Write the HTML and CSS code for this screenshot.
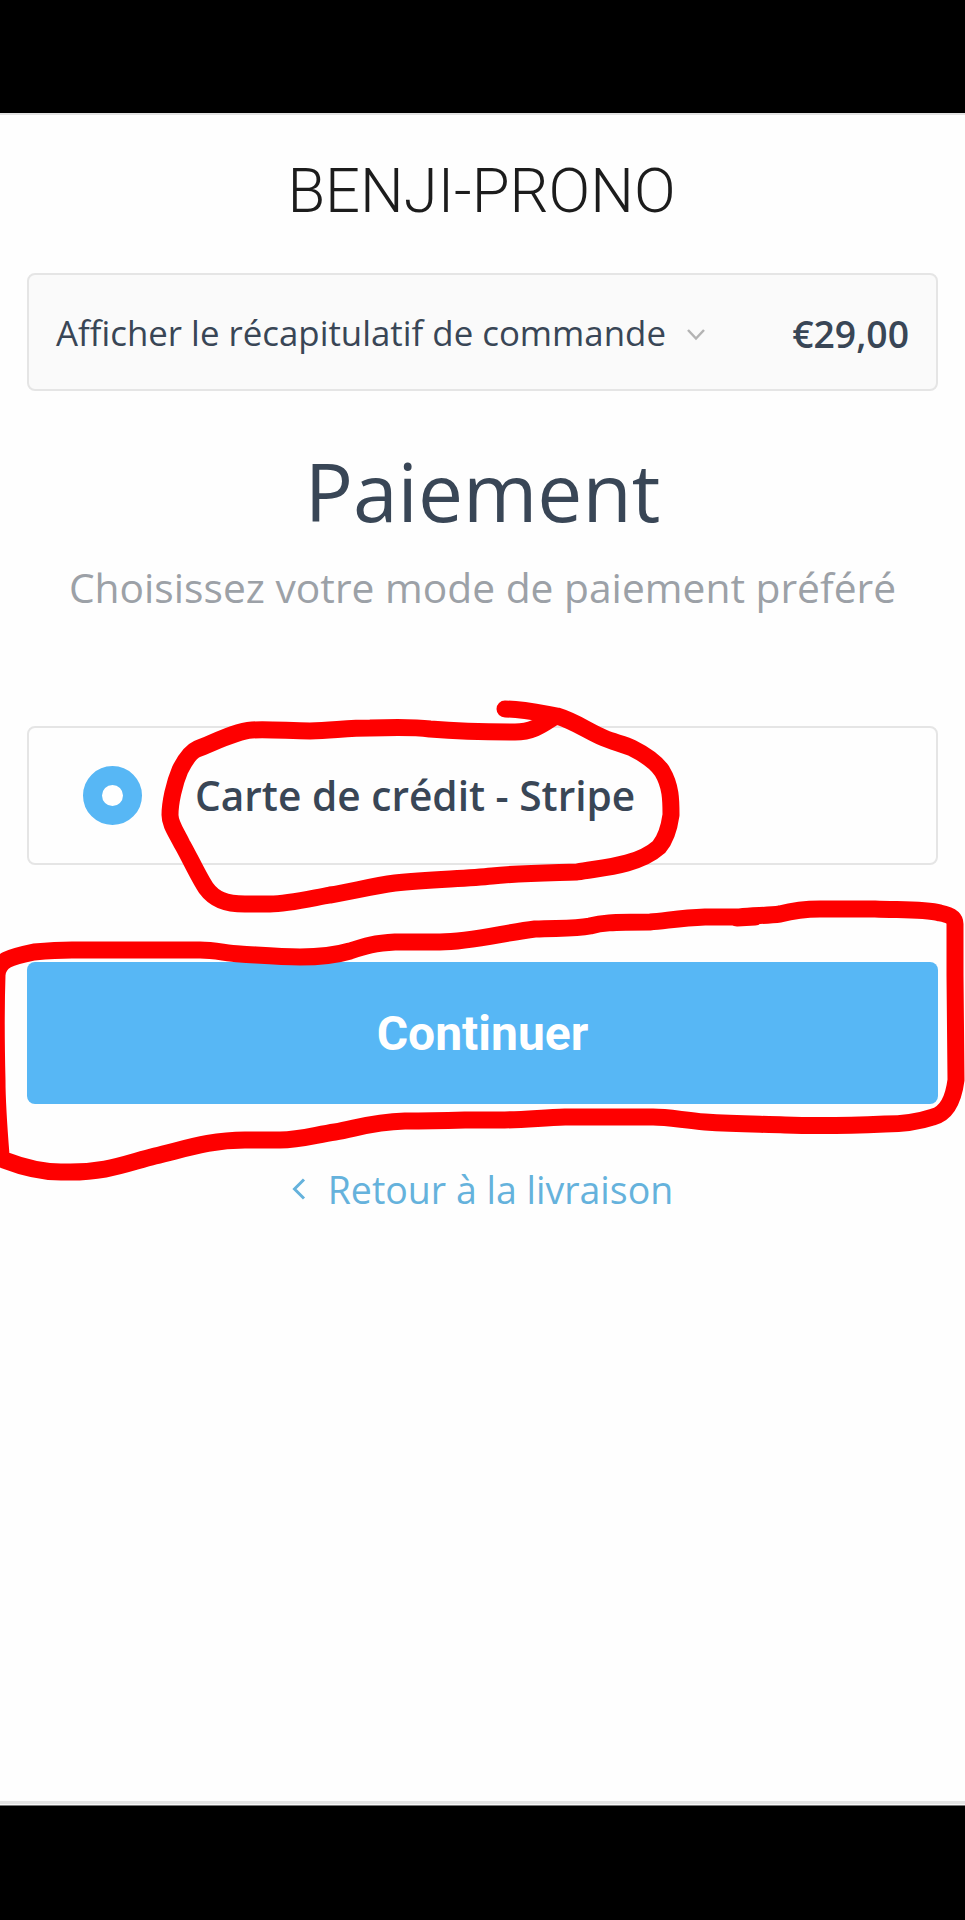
FILE: index.html
```html
<!DOCTYPE html>
<html lang="fr">
<head>
<meta charset="utf-8">
<title>Paiement - BENJI-PRONO</title>
<link rel="stylesheet" href="styles.css">
</head>
<body>
<div class="screen">
  <main class="page">
    <h1 class="brand"><span>BENJI-PRONO</span></h1>
    <section class="summary">
      <span class="summary-label">Afficher le récapitulatif de commande</span>
      <svg class="chevron-down" width="20" height="14" viewBox="0 0 20 14"><path d="M2 2l8 8.500 8-8.500"/></svg>
      <strong class="price">€29,00</strong>
    </section>
    <h2 class="heading"><span>Paiement</span></h2>
    <p class="hint"><span>Choisissez votre mode de paiement préféré</span></p>
    <label class="option">
      <span class="radio"></span>
      <span class="option-label">Carte de crédit - Stripe</span>
    </label>
    <button class="submit"><span>Continuer</span></button>
    <a class="back">
      <svg class="chevron-left" width="14" height="22" viewBox="0 0 14 22"><path d="M12 1.500L2.500 11l9.500 9.500"/></svg>
      <span class="back-label">Retour à la livraison</span>
    </a>
  </main>
  <svg class="marks" width="965" height="1920" viewBox="0 0 965 1920">
    <path d="M505 709C522 709 540 713 557 716C574 721 588 731 604 738C613 742 624 744 632 748C644 754 656 762 662 771C671 786 671 800 671 815C669 829 665 840 659 847C650 855 638 860 627 863C609 868 594 869 577 872C540 873 520 873 492 876C465 879 430 879 395 883C372 886 350 892 330 895C308 899 287 904 270 904H245C225 904 214 899 206 888C199 878 188 854 182 844C176 832 170 824 170 815C170 803 174 784 180 770C185 760 190 752 197 749C213 743 236 731 252 730C270 729 290 731 310 731C335 730 350 728 370 728C400 727 415 727 430 729C455 731 480 732 515 732C533 732 543 724 554 717"/>
    <path d="M1 1155C-1 1130 -3 1105 -3 1080C-4 1040 -4 1005 -3 975C-2 960 10 957 34 952C45 951 58 950 72 950H200C215 950 225 953 240 954C258 955 279 957 300 957C318 957 333 956 350 951C365 946 375 943 395 942H440C470 942 503 933 535 929C560 928 575 929 590 926C601 923 610 922 650 922C665 921 680 918 705 917H740C752 915 766 916 780 914C795 910 804 909 820 909H875C905 910 925 909 940 913C951 915 955 918 955 924V975L956 1080C953 1103 945 1114 933 1117C915 1123 900 1124 885 1124C840 1126 815 1126 785 1125C755 1124 735 1124 705 1122C682 1120 668 1117 653 1117H565C540 1118 520 1120 500 1120H465C430 1121 422 1121 405 1121C370 1122 355 1129 335 1132C315 1135 300 1140 280 1140H245C210 1140 185 1149 155 1156C127 1163 106 1173 65 1172C39 1173 17 1165 4 1160Q1 1157 -3 1156"/>
    <path d="M737 918L755 917"/>
  </svg>
</div>
</body>
</html>
```
FILE: styles.css
```css
* { box-sizing: border-box; }
body { margin: 0; background: #000; }
.screen {
  position: relative;
  width: 965px;
  height: 1920px;
  padding: 113px 0 114px;
  overflow: hidden;
  background: #000;
}
.page {
  display: flex;
  flex-direction: column;
  height: 1693px;
  padding: 0 27px;
  background: linear-gradient(#e2e2e2 0 2px, #fefefe 2px 1688px, #e4e4e4 1688px 1691px, #f8f8f8 1691px 1692px, #777 1692px);
  color: #394656;
  font-family: "Open Sans", "Noto Sans", sans-serif;
}
.brand {
  margin: 43px 0 0;
  padding-right: 2px;
  height: 70px;
  line-height: 70px;
  text-align: center;
  font-family: Roboto, sans-serif;
  font-weight: 300;
  font-size: 61.500px;
  color: #1c1c1c;
}
.summary {
  display: flex;
  align-items: center;
  height: 118px;
  margin-top: 47px;
  padding: 0 27px;
  border: 2px solid #e5e5e5;
  border-radius: 8px;
  background: #fafafa;
}
.summary-label { font-size: 34.850px; }
.chevron-down { margin: 6px 0 0 20px; }
.chevron-down path { fill: none; stroke: #b3b3b3; stroke-width: 2.500; }
.price { margin: 3px 0 0 auto; font-size: 37.300px; font-weight: 600; }
.heading {
  margin: 46px 0 0;
  height: 109px;
  line-height: 109px;
  text-align: center;
  font-size: 80.300px;
  font-weight: 400;
}
.hint {
  margin: 13px 0 0;
  height: 56px;
  line-height: 56px;
  text-align: center;
  white-space: nowrap;
  font-size: 40.750px;
  color: #9ca1a7;
}
.option {
  display: flex;
  align-items: center;
  height: 139px;
  margin-top: 111px;
  padding-left: 54px;
  border: 2px solid #e5e5e5;
  border-radius: 8px;
}
.radio {
  width: 59px;
  height: 59px;
  border: 19px solid #57b7f5;
  border-radius: 50%;
  background: #fff;
}
.option-label { margin-left: 53px; font-size: 40.650px; font-weight: 600; }
.submit {
  height: 142px;
  margin-top: 97px;
  border: 0;
  border-radius: 8px;
  background: #57b7f5;
  color: #fff;
  font: 700 48px Roboto, sans-serif;
}
.back {
  display: flex;
  align-items: center;
  justify-content: center;
  height: 52px;
  margin-top: 59px;
  font-size: 37.500px;
  color: #65b2dc;
}
.chevron-left path { fill: none; stroke: #65b2dc; stroke-width: 3; }
.back-label { margin-left: 22px; }
.marks { position: absolute; left: 0; top: 0; pointer-events: none; }
.marks path {
  fill: none;
  stroke: #fe0000;
  stroke-width: 17;
  stroke-linecap: round;
  stroke-linejoin: round;
}
```
